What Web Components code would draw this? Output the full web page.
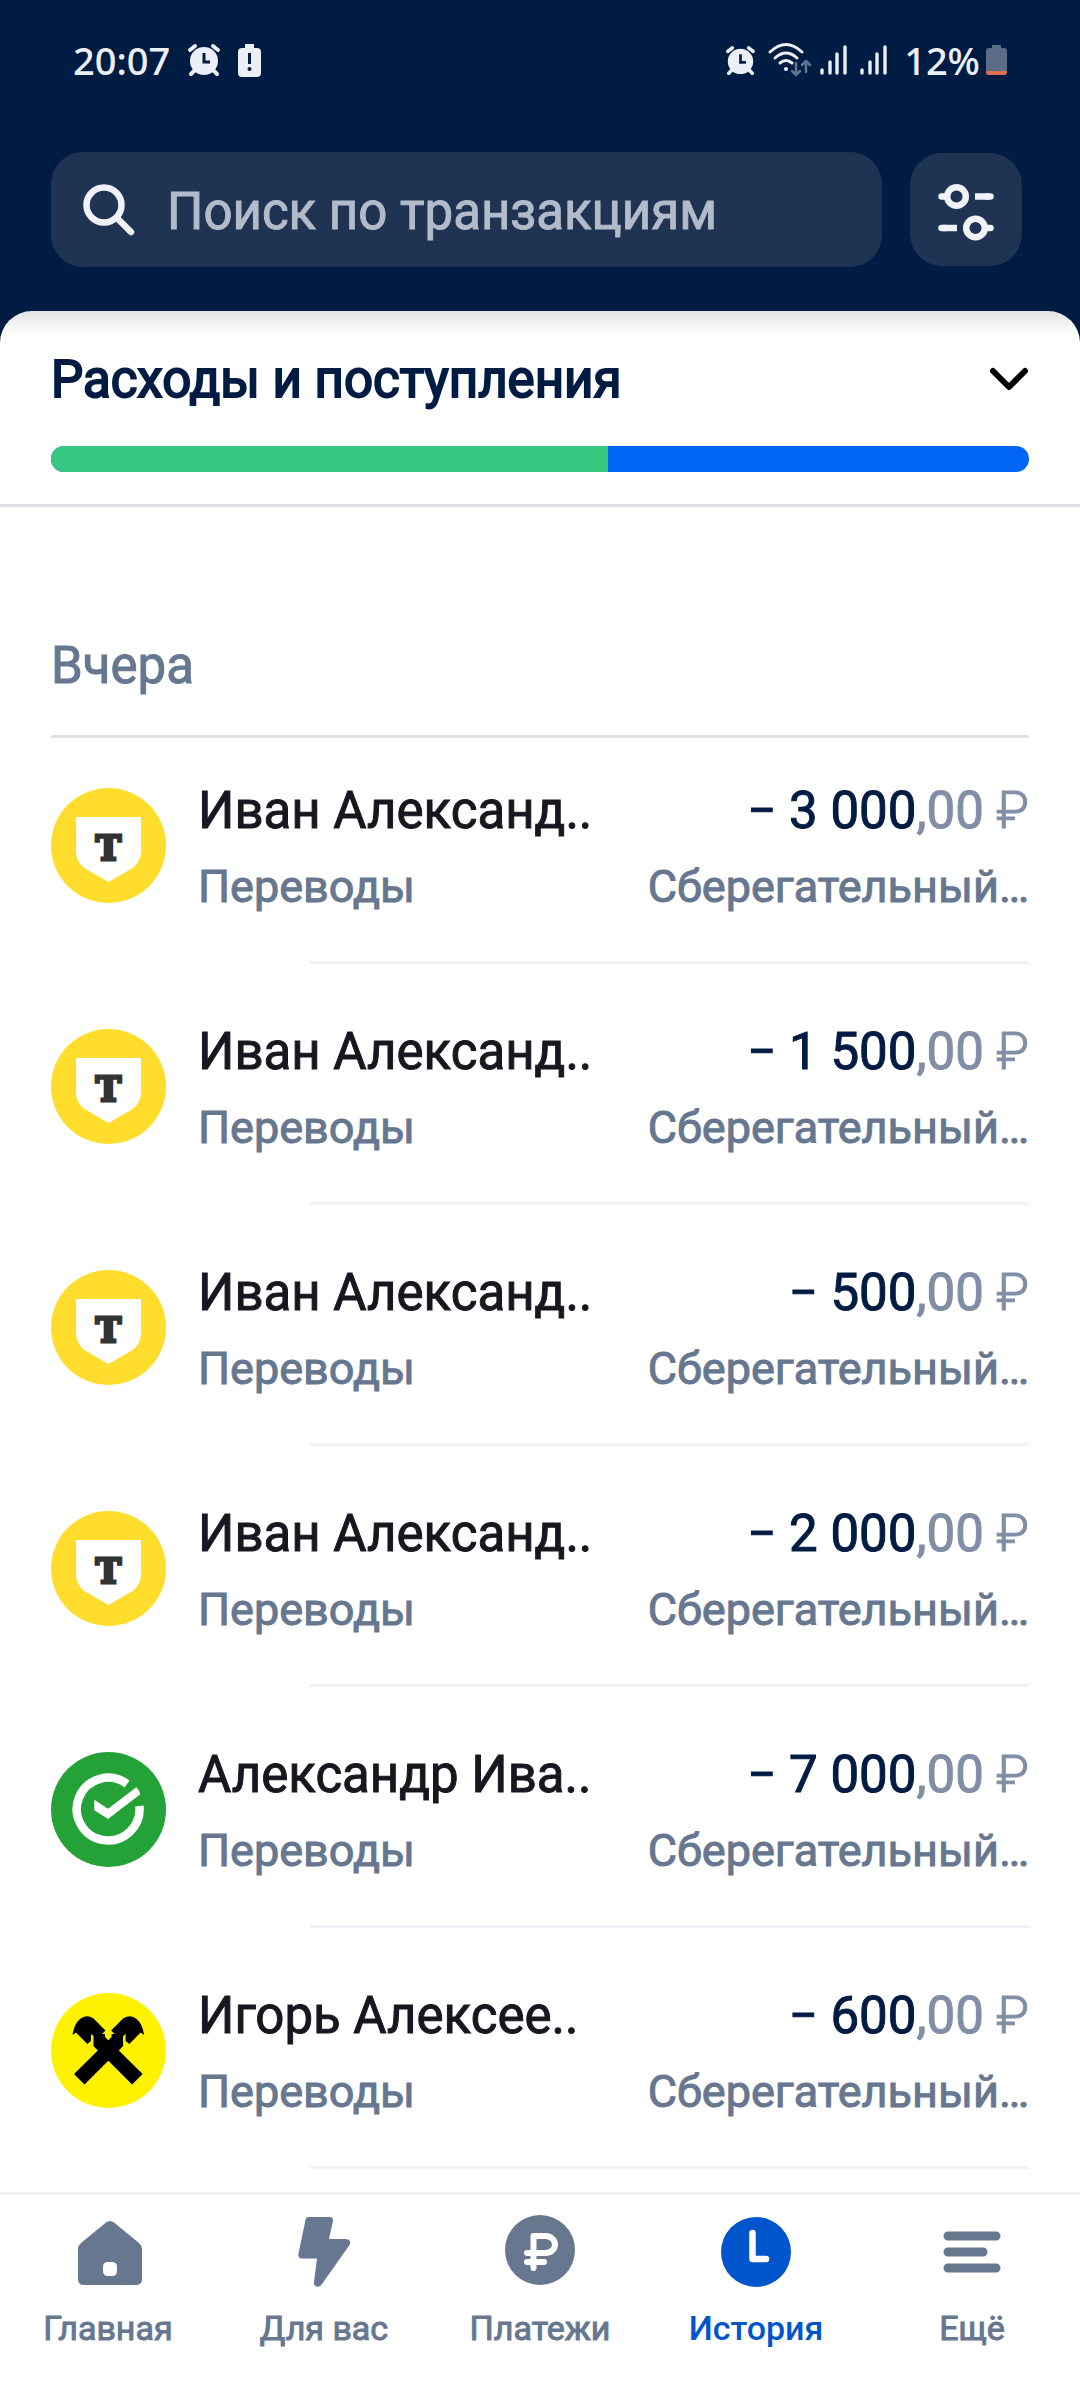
<!DOCTYPE html>
<html lang="ru">
<head>
<meta charset="utf-8">
<meta name="viewport" content="width=device-width, initial-scale=1">
<title>История</title>
<style>
    body {
        margin: 0;
        background: #fff;
        font-family: Roboto, "Noto Sans", sans-serif;
        --navy: #001c43;
        --slate: #66778f;
        --edge: 51px;
    }
</style>
</head>
<body>
<bank-app></bank-app>

<script>
const ICONS = {
    alarm: `<svg viewBox="0 0 32 32" fill="#eceff6">
        <circle cx="16" cy="17" r="14"/>
        <path d="M2 6l5-4M30 6l-5-4M6 27l-3 3M26 27l3 3" stroke="#eceff6" stroke-width="4" stroke-linecap="round"/>
        <path d="M16 9v9h6" fill="none" stroke="#001c43" stroke-width="3"/></svg>`,
    alert: `<svg viewBox="0 0 23 33"><path fill="#eceff6" d="M7 0h9v4h3q4 0 4 4v21q0 4-4 4H4q-4 0-4-4V8q0-4 4-4h3z"/>
        <path d="M11.500 9v11" stroke="#001c43" stroke-width="3"/><circle cx="11.500" cy="25" r="2" fill="#001c43"/></svg>`,
    wifi: `<svg viewBox="0 0 43 34" fill="none" stroke-linecap="round" stroke-linejoin="round">
        <g stroke="#eceff6" stroke-width="3"><path d="M2 9Q18-6 34 9M7 15Q18 5 29 15M12 20Q18 15 24 20"/></g>
        <circle cx="18" cy="26" r="2" fill="#eceff6"/>
        <path d="M28 20v12M24 28l4 4 4-4M38 29V18M34 22l4-4 4 4" stroke="#63748d" stroke-width="2.500"/></svg>`,
    signal: `<svg viewBox="0 0 27 30"><path d="M2 25v3M10 17v11M17 9v19M25 2v26" stroke="#eceff6" stroke-width="3.400" stroke-linecap="round"/></svg>`,
    battery: `<svg viewBox="0 0 21 30"><path fill="#5b6c87" d="M6 0h9v3h3q3 0 3 3v20H0V6q0-3 3-3h3z"/>
        <path fill="#e0704f" d="M0 26h21v1q0 3-3 3H3q-3 0-3-3z"/></svg>`,
    search: `<svg viewBox="0 0 52 52" fill="none" stroke="#f1f2f9" stroke-width="6.500" stroke-linecap="round">
        <circle cx="21" cy="21" r="17.500"/><path d="M34 34l14 14"/></svg>`,
    filter: `<svg viewBox="0 -3 56 57" fill="none" stroke="#f1f2f9" stroke-width="6.500">
        <circle cx="18.500" cy="12.500" r="9.300"/><circle cx="37.500" cy="44" r="9.300"/>
        <path d="M37 12.500h14M5 44h14"/>
        <path d="M3.500 12.500h4M52.500 12.500h-4M3.500 44h4M52.500 44h-4" stroke-linecap="round"/></svg>`,
    chevron: `<svg viewBox="1 1 38 23" fill="none" stroke="#000" stroke-width="6" stroke-linecap="round" stroke-linejoin="round">
        <path d="M3 3l16 16L35 3"/></svg>`,
    shield: `<svg viewBox="0 0 115 115"><circle cx="57.500" cy="57.500" r="57.500" fill="#ffdd2d"/>
        <path fill="#fff" d="M25 29h65v34c0 8-4 14-10 18L57.500 94 35 81c-6-4-10-10-10-18z"/>
        <text x="57.500" y="72" text-anchor="middle" font-family="DejaVu Serif, serif" font-weight="700" font-size="34" fill="#333" stroke="#333" stroke-width="3">T</text></svg>`,
    check: `<svg viewBox="0 0 115 115"><circle cx="57.500" cy="57.500" r="57.500" fill="#24a238"/>
        <path d="M76 32A31.400 31.400 0 1 0 88.400 54" fill="none" stroke="#fff" stroke-width="8.500"/>
        <path fill="#fff" d="M43.300 47.700L57 56.700l28.300-21.400q3 3 4 7L57 67 43.300 58.300z"/></svg>`,
    cross: `<svg viewBox="0 0 115 115"><circle cx="57.500" cy="57.500" r="57.500" fill="#fff200"/>
        <g id="h"><path d="M58 48l-4-4v-3h-3l3.500-3.500-12-12Q35 21 29 26q-6 5-7.500 16l3.500-2.500L36.300 51l3.700-3v-7l2.500 2v10l4.300 4.500L23 81l10.500 10.500L58 67z"/></g>
        <use href="#h" transform="matrix(-1 0 0 1 114.600 0)"/></svg>`,
    home: `<svg viewBox="-2 -1 70 70" fill="#66778f"><path fill-rule="evenodd" d="M31 5.500q4-3 8 0L64 26q3 2.500 3 6v30q0 6-6 6H9q-6 0-6-6V32q0-3.500 3-6zM33 45q-5 0-5 5v4q0 5 5 5h4q5 0 5-5v-4q0-5-5-5z"/></svg>`,
    bolt: `<svg viewBox="0 -1 70 70" fill="#66778f"><path d="M20 0h20.500q4 0 3.500 4l-4 18h17q6 1 3.500 6L33 67q-2 3.500-5.500 2.500-3-1-2.500-4.500l3-23.500H13q-4.500 0-3.500-5L16.500 3q.5-3 3.500-3z"/></svg>`,
    rouble: `<svg viewBox="0 1 70 70"><circle cx="35" cy="35" r="35" fill="#66778f"/>
        <path d="M28.500 53V21h12a9.500 8.500 0 0 1 0 17H22M22 47h17" fill="none" stroke="#fff" stroke-width="6" stroke-linecap="round" stroke-linejoin="round"/></svg>`,
    clock: `<svg viewBox="0 -1 70 70"><circle cx="35" cy="35" r="35" fill="#0055cc"/>
        <path d="M31.500 16v26H45" fill="none" stroke="#fff" stroke-width="6.500" stroke-linecap="round" stroke-linejoin="round"/></svg>`,
    menu: `<svg viewBox="0 0 70 70"><path d="M11 20h48M11 36h35M11 52h48" stroke="#66778f" stroke-width="9" stroke-linecap="round"/></svg>`
};

class AppIcon extends HTMLElement {
    constructor() {
        super();
        this.attachShadow({ mode: 'open' });
    }

    connectedCallback() {
        this.shadowRoot.innerHTML = `
        <style>
        :host{ display:block; flex:none; }
        svg{ display:block; width:100%; height:100%; overflow:visible; }
        </style>
        ${ICONS[this.getAttribute('name')]}
        `;
    }
}

class StatusBar extends HTMLElement {
    constructor() {
        super();
        this.attachShadow({ mode: 'open' });
        this.shadowRoot.innerHTML = `
        <style>
        :host{
            display:flex;
            align-items:center;
            justify-content:space-between;
            height:120px;
            padding:0 73px;
            color:#eceff6;
            font:500 38px/48px "Noto Sans", sans-serif;
        }
        div{ display:flex; align-items:center; }
        .left{ gap:18px; }
        .right{ gap:13px; }
        .charge{ gap:6px; margin-left:4px; }
        .alarm{ width:32px; height:32px; }
        .small{ width:29px; height:29px; }
        .alert{ width:23px; height:33px; }
        .wifi{ width:43px; height:34px; margin-right:-4px; }
        .signal{ width:27px; height:30px; }
        .battery{ width:21px; height:30px; }
        </style>
        <div class="left">
            <span>20:07</span>
            <app-icon class="alarm" name="alarm"></app-icon>
            <app-icon class="alert" name="alert"></app-icon>
        </div>
        <div class="right">
            <app-icon class="small" name="alarm"></app-icon>
            <app-icon class="wifi" name="wifi"></app-icon>
            <app-icon class="signal" name="signal"></app-icon>
            <app-icon class="signal" name="signal"></app-icon>
            <div class="charge"><span>12%</span><app-icon class="battery" name="battery"></app-icon></div>
        </div>
        `;
    }
}

class SearchBar extends HTMLElement {
    constructor() {
        super();
        this.attachShadow({ mode: 'open' });
        this.shadowRoot.innerHTML = `
        <style>
        :host{
            display:flex;
            align-items:center;
            gap:28px;
            padding:32px 58px 44px var(--edge);
        }
        label{
            flex:1;
            min-width:0;
            display:flex;
            align-items:center;
            gap:32px;
            height:115px;
            box-sizing:border-box;
            padding:0 32px;
            border-radius:32px;
            background:#1f3353;
        }
        label app-icon{ width:52px; height:52px; }
        input{
            flex:1;
            min-width:0;
            padding:4px 0 0;
            border:0;
            outline:0;
            background:none;
            color:#fff;
            font:400 51px/64px Roboto, sans-serif;
        }
        input::placeholder{ color:#b2bbc9; opacity:1; -webkit-text-stroke:1px #b2bbc9; }
        button{
            display:grid;
            place-items:center;
            width:112px;
            height:113px;
            padding:0;
            border:0;
            border-radius:32px;
            background:#1f3353;
        }
        button app-icon{ width:56px; height:57px; }
        </style>
        <label>
            <app-icon name="search"></app-icon>
            <input type="text" placeholder="Поиск по транзакциям" aria-label="Поиск по транзакциям">
        </label>
        <button type="button" aria-label="Фильтры"><app-icon name="filter"></app-icon></button>
        `;
    }
}

class SpendSummary extends HTMLElement {
    constructor() {
        super();
        this.attachShadow({ mode: 'open' });
        this.shadowRoot.innerHTML = `
        <style>
        :host{
            display:block;
            padding:37px var(--edge) 32px;
            border-bottom:3px solid #dfe0e5;
            border-radius:32px 32px 0 0;
            background:linear-gradient(#e3e3e5, #fff 24px);
        }
        button{
            display:flex;
            align-items:center;
            justify-content:space-between;
            width:100%;
            padding:0;
            border:0;
            background:none;
            color:var(--navy);
            font:400 51px/64px Roboto, sans-serif;
            text-align:left;
            -webkit-text-stroke:2px;
        }
        app-icon{ width:38px; height:23px; }
        .bar{
            display:flex;
            height:26px;
            margin-top:34px;
            border-radius:13px;
            overflow:hidden;
            background:#0065f4;
        }
        .bar i{ width:57%; background:#37c882; }
        </style>
        <button type="button" aria-expanded="false"><slot></slot><app-icon name="chevron"></app-icon></button>
        <div class="bar"><i></i></div>
        `;
    }
}

class OperationRow extends HTMLElement {
    constructor() {
        super();
        this.attachShadow({ mode: 'open' });
    }

    connectedCallback() {
        this.shadowRoot.innerHTML = `
        <style>
        :host{
            display:grid;
            grid-template-columns:115px auto 1fr;
            column-gap:32px;
            align-items:start;
            padding:41px 0 46px;
            position:relative;
            -webkit-text-stroke:1px;
        }
        /* hairline starts past the text column */
        :host::after{
            content:"";
            position:absolute;
            left:259px;
            right:0;
            bottom:0;
            height:3px;
            background:#f1f2f7;
        }
        .logo{ width:115px; height:115px; margin-top:9px; -webkit-text-stroke:0; }
        .name, .sum{ font-size:51px; line-height:64px; white-space:nowrap; }
        .name{ color:#17181f; }
        .sum{ color:var(--navy); }
        .sub{ margin-top:13px; color:var(--slate); font-size:45px; line-height:62px; white-space:nowrap; }
        .right{ text-align:right; }
        .cents{ color:#808fa5; }
        .cur{ color:#808fa5; font-weight:300; }
        </style>
        <app-icon class="logo" name="${this.getAttribute('logo')}"></app-icon>
        <div>
            <div class="name"><slot></slot></div>
            <div class="sub">Переводы</div>
        </div>
        <div class="right">
            <div class="sum">− ${this.getAttribute('sum')}<span class="cents">,00</span><span class="cur"> ₽</span></div>
            <div class="sub">Сберегательный…</div>
        </div>
        `;
    }
}

class DayGroup extends HTMLElement {
    constructor() {
        super();
        this.attachShadow({ mode: 'open' });
        this.shadowRoot.innerHTML = `
        <style>
        :host{ display:block; padding:127px var(--edge) 23px; }
        h2{
            margin:0;
            padding-bottom:37px;
            border-bottom:3px solid #dde1e4;
            color:var(--slate);
            font-size:51px;
            line-height:64px;
            font-weight:400;
            -webkit-text-stroke:1px;
        }
        .rows{ display:flex; flex-direction:column; gap:15px; }
        </style>
        <h2><slot name="day"></slot></h2>
        <div class="rows"><slot></slot></div>
        `;
    }
}

class TabItem extends HTMLElement {
    constructor() {
        super();
        this.attachShadow({ mode: 'open' });
    }

    connectedCallback() {
        this.shadowRoot.innerHTML = `
        <style>
        :host{ display:block; flex:1; min-width:0; }
        a{
            display:flex;
            flex-direction:column;
            align-items:center;
            gap:22px;
            color:var(--slate);
            font-size:34px;
            line-height:40px;
            font-weight:400;
            text-decoration:none;
            -webkit-text-stroke:1px;
        }
        :host([active]) a{ color:#0055cc; font-weight:500; -webkit-text-stroke:0; }
        app-icon{ width:70px; height:70px; }
        </style>
        <a href="#"><app-icon name="${this.getAttribute('icon')}"></app-icon><slot></slot></a>
        `;
    }
}

class TabBar extends HTMLElement {
    constructor() {
        super();
        this.attachShadow({ mode: 'open' });
        this.shadowRoot.innerHTML = `
        <style>
        :host{ display:block; border-top:3px solid #f1f2f4; background:#fff; }
        nav{ display:flex; padding:21px 0 52px; }
        </style>
        <nav><slot></slot></nav>
        `;
    }
}

class BankApp extends HTMLElement {
    constructor() {
        super();
        this.attachShadow({ mode: 'open' });
        this.shadowRoot.innerHTML = `
        <style>
        :host{ display:flex; flex-direction:column; min-height:100vh; }
        header{ background:var(--navy); }
        main{ flex:1; }
        </style>
        <header>
            <status-bar></status-bar>
            <search-bar></search-bar>
            <spend-summary>Расходы и поступления</spend-summary>
        </header>
        <main>
            <day-group>
                <span slot="day">Вчера</span>
                <operation-row logo="shield" sum="3 000">Иван Александ..</operation-row>
                <operation-row logo="shield" sum="1 500">Иван Александ..</operation-row>
                <operation-row logo="shield" sum="500">Иван Александ..</operation-row>
                <operation-row logo="shield" sum="2 000">Иван Александ..</operation-row>
                <operation-row logo="check" sum="7 000">Александр Ива..</operation-row>
                <operation-row logo="cross" sum="600">Игорь Алексее..</operation-row>
            </day-group>
        </main>
        <tab-bar>
            <tab-item icon="home">Главная</tab-item>
            <tab-item icon="bolt">Для вас</tab-item>
            <tab-item icon="rouble">Платежи</tab-item>
            <tab-item icon="clock" active>История</tab-item>
            <tab-item icon="menu">Ещё</tab-item>
        </tab-bar>
        `;
    }
}

customElements.define('app-icon', AppIcon);
customElements.define('status-bar', StatusBar);
customElements.define('search-bar', SearchBar);
customElements.define('spend-summary', SpendSummary);
customElements.define('operation-row', OperationRow);
customElements.define('day-group', DayGroup);
customElements.define('tab-item', TabItem);
customElements.define('tab-bar', TabBar);
customElements.define('bank-app', BankApp);
</script>
</body>
</html>
